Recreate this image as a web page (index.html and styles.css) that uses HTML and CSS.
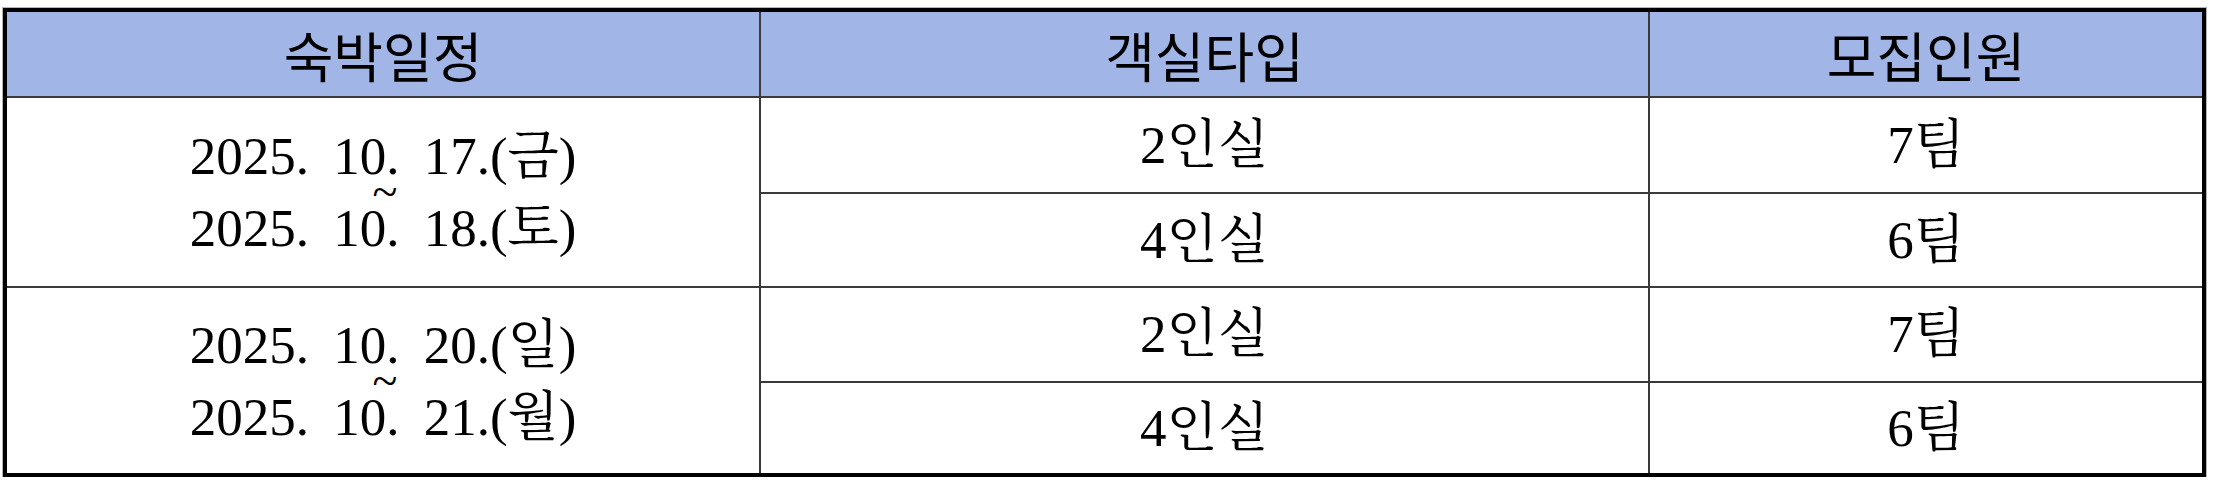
FILE: index.html
```html
<!DOCTYPE html>
<html lang="ko">
<head>
<meta charset="utf-8">
<title>숙박일정</title>
<link rel="stylesheet" href="styles.css">
</head>
<body>
<div class="sheet">
  <div class="cell head">숙박일정</div>
  <div class="cell head">객실타입</div>
  <div class="cell head">모집인원</div>

  <div class="cell date span-a">
    <div class="dates">
      <div class="dline">2025. 10. 17.(금)</div>
      <div class="tilde">~</div>
      <div class="dline">2025. 10. 18.(토)</div>
    </div>
  </div>
  <div class="cell data">2인실</div>
  <div class="cell data">7팀</div>
  <div class="cell data">4인실</div>
  <div class="cell data">6팀</div>

  <div class="cell date span-b">
    <div class="dates">
      <div class="dline">2025. 10. 20.(일)</div>
      <div class="tilde">~</div>
      <div class="dline">2025. 10. 21.(월)</div>
    </div>
  </div>
  <div class="cell data">2인실</div>
  <div class="cell data">7팀</div>
  <div class="cell data">4인실</div>
  <div class="cell data">6팀</div>
</div>
</body>
</html>
```

FILE: styles.css
```css
html, body {
  margin: 0;
  padding: 0;
  background: #ffffff;
}

body {
  padding: 8px 0 0 3px;
}

.sheet {
  box-sizing: border-box;
  width: 2203px;
  height: 469px;
  border: 4px solid #000000;
  box-shadow: 0 0 0 1px #b4b4b4;
  background: #3a3a3a;
  display: grid;
  grid-template-columns: 752px 887px 552px;
  grid-template-rows: 84px 94px 92px 93px 90px;
  gap: 2px;
}

.cell {
  display: flex;
  align-items: center;
  justify-content: center;
  background: #ffffff;
  color: #000000;
  white-space: nowrap;
}

.head {
  background: #a1b5e6;
  font-family: "Noto Sans CJK KR", "Noto Sans", sans-serif;
  font-size: 54px;
  font-weight: 400;
  line-height: 1;
  padding-top: 2px;
}

.data,
.date {
  font-family: "Liberation Serif", "Noto Serif CJK KR", "Noto Sans CJK KR", serif;
  font-size: 53px;
  line-height: 1;
}

.span-a {
  grid-column: 1;
  grid-row: 2 / span 2;
}

.span-b {
  grid-column: 1;
  grid-row: 4 / span 2;
}

.dates {
  display: flex;
  flex-direction: column;
  align-items: center;
}

.dline {
  line-height: 60px;
  word-spacing: 11px;
}

.tilde {
  line-height: 12px;
  height: 12px;
  font-size: 46px;
  transform: translateX(2px);
}
```
